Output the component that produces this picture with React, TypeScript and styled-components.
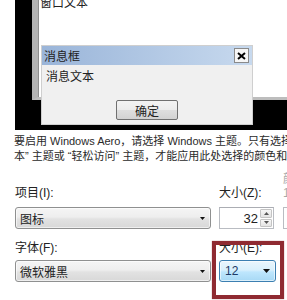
import React from 'react';
import styled, {createGlobalStyle} from 'styled-components';

const GlobalStyle = createGlobalStyle`
  html, body {
    margin: 0;
    padding: 0;
    background: #fff;
  }
  body {
    font-family: "Liberation Sans", "Noto Sans CJK SC", sans-serif;
    font-size: 12px;
    color: #222;
  }
`;

const Page = styled.div`
  position: relative;
  width: 287px;
  height: 300px;
  overflow: hidden;
`;

/* preview of the window colours */
const Preview = styled.div`
  position: relative;
  height: 130px;
  margin-left: 15px;
  background: #000;
  overflow: hidden;
`;

const BackWindow = styled.div`
  margin-left: 17px;
  height: 97px;
  background: #fff;
  border-left: 6px solid #b4b4b4;
  border-bottom: 3px solid #bdbdbd;
  box-shadow: inset 1px 0 0 #8f8f8f;
  overflow: hidden;
`;

const WindowText = styled.div`
  margin-top: -4px;
  padding-left: 2px;
  line-height: 14px;
`;

const MessageBox = styled.div`
  position: absolute;
  left: 26px;
  top: 45px;
  width: 212px;
  height: 80px;
  box-sizing: border-box;
  border: 1px solid #cfcfcf;
  background: #f0f0f0;
  display: flex;
  flex-direction: column;
`;

const TitleBar = styled.div`
  height: 19px;
  display: flex;
  align-items: center;
  justify-content: space-between;
  padding: 0 3px 0 2px;
  background: linear-gradient(to right, #9ab5d9, #c7d9ee);
`;

const CloseButton = styled.div`
  width: 15px;
  height: 15px;
  box-sizing: border-box;
  border: 1px solid #8a8a8a;
  background: #f6f6f6;
  display: flex;
  align-items: center;
  justify-content: center;
`;

const MessageBody = styled.div`
  flex: 1;
  display: flex;
  flex-direction: column;
  padding: 6px 0 0 4px;
`;

const MessageText = styled.div`
  line-height: 12px;
`;

const OkButton = styled.div`
  align-self: center;
  margin: 17px 0 0 -4px;
  width: 62px;
  height: 20px;
  box-sizing: border-box;
  border: 1px solid #707070;
  border-radius: 2px;
  background: linear-gradient(#f3f3f3, #ececec 48%, #dedede 52%, #d2d2d2);
  display: flex;
  align-items: center;
  justify-content: center;
`;

const Paragraph = styled.div`
  height: 30px;
  padding: 4px 0 0 14px;
`;

const Line = styled.div`
  white-space: nowrap;
  overflow: hidden;
  line-height: 15px;
  font-size: 11px;
  color: #2a2a2a;
`;

const Row = styled.div<{ $top: number; $height: number }>`
  display: grid;
  grid-template-columns: 204px 64px 40px;
  height: ${p => p.$height}px;
  padding-left: 15px;
  margin-top: ${p => p.$top}px;
`;

const Field = styled.div`
  height: 100%;
  display: flex;
  flex-direction: column;
  justify-content: flex-end;
`;

const Label = styled.div<{ $gap: number; $dim?: boolean }>`
  line-height: 14px;
  margin-bottom: ${p => p.$gap}px;
  color: ${p => (p.$dim ? '#a8a8a8' : '#222')};
  white-space: nowrap;
`;

const Combo = styled.div<{ $width: number; $active?: boolean }>`
  width: ${p => p.$width}px;
  height: 22px;
  box-sizing: border-box;
  border: 1px solid ${p => (p.$active ? '#3c7fb1' : '#8f9090')};
  border-radius: 3px;
  background: ${p =>
    p.$active
      ? 'linear-gradient(#eaf6fd, #d9f0fc 45%, #bee6fd 55%, #a7d9f5)'
      : 'linear-gradient(#f5f5f5, #eeeeee 45%, #e2e2e2 55%, #d8d8d8)'};
  box-shadow: inset 0 0 0 1px rgba(255, 255, 255, 0.6);
  display: flex;
  align-items: center;
  justify-content: space-between;
  padding: 0 5px 0 ${p => (p.$active ? 5 : 4)}px;
  color: ${p => (p.$active ? '#1d3a66' : '#222')};
`;

const SpinBox = styled.div`
  width: 55px;
  height: 22px;
  box-sizing: border-box;
  border: 1px solid #b9bcc2;
  border-top-color: #abadb3;
  background: #fff;
  display: flex;
  align-items: stretch;
  padding: 1px;
`;

const SpinValue = styled.div`
  flex: 1;
  display: flex;
  align-items: center;
  justify-content: flex-end;
  padding-right: 2px;
  font-size: 13px;
`;

const SpinButtons = styled.div`
  width: 12px;
  display: flex;
  flex-direction: column;
  gap: 1px;
`;

const SpinButton = styled.div`
  flex: 1;
  box-sizing: border-box;
  border: 1px solid #c4c4c4;
  border-radius: 1px;
  background: linear-gradient(#f7f7f7, #e4e4e4);
  display: flex;
  align-items: center;
  justify-content: center;
`;

const BlankBox = styled.div`
  width: 50px;
  height: 22px;
  box-sizing: border-box;
  border: 1px solid #b9bcc2;
  background: #fff;
`;

const Highlight = styled.div`
  position: absolute;
  left: 212px;
  top: 241px;
  width: 72px;
  height: 58px;
  box-sizing: border-box;
  border: 4px solid #8f2a31;
  box-shadow: 0 0 1px rgba(120, 20, 30, 0.6);
`;

function Arrow({w, h}: { w: number; h: number }) {
  return (
    <svg width={w} height={h} viewBox={`0 0 ${w} ${h}`}>
      <polygon points={`0,0 ${w},0 ${w / 2},${h}`} fill="#111"/>
    </svg>
  );
}

function SpinArrow({up}: { up?: boolean }) {
  return (
    <svg width="5" height="3" viewBox="0 0 5 3">
      <polygon points={up ? '0,3 5,3 2.5,0' : '0,0 5,0 2.5,3'} fill="#555"/>
    </svg>
  );
}

export default function App() {
  return (
    <Page>
      <GlobalStyle/>
      <Preview>
        <BackWindow>
          <WindowText>窗口文本</WindowText>
        </BackWindow>
        <MessageBox>
          <TitleBar>
            <span>消息框</span>
            <CloseButton>
              <svg width="9" height="8" viewBox="0 0 9 8">
                <path d="M1 1 L8 7 M8 1 L1 7" stroke="#000" strokeWidth="2"/>
              </svg>
            </CloseButton>
          </TitleBar>
          <MessageBody>
            <MessageText>消息文本</MessageText>
            <OkButton>确定</OkButton>
          </MessageBody>
        </MessageBox>
      </Preview>

      <Paragraph>
        <Line>要启用 Windows Aero，请选择 Windows 主题。只有选择“Windows 7 基</Line>
        <Line>本” 主题或 “轻松访问” 主题，才能应用此处选择的颜色和字体。</Line>
      </Paragraph>

      <Row $top={8} $height={57}>
        <Field>
          <Label $gap={7}>项目(I):</Label>
          <Combo $width={196}>
            <span>图标</span>
            <Arrow w={5} h={3}/>
          </Combo>
        </Field>
        <Field>
          <Label $gap={7}>大小(Z):</Label>
          <SpinBox>
            <SpinValue>32</SpinValue>
            <SpinButtons>
              <SpinButton><SpinArrow up/></SpinButton>
              <SpinButton><SpinArrow/></SpinButton>
            </SpinButtons>
          </SpinBox>
        </Field>
        <Field>
          <Label $gap={7} $dim>颜色<br/>1(L):</Label>
          <BlankBox/>
        </Field>
      </Row>

      <Row $top={12} $height={41}>
        <Field>
          <Label $gap={5}>字体(F):</Label>
          <Combo $width={196}>
            <span>微软雅黑</span>
            <Arrow w={5} h={3}/>
          </Combo>
        </Field>
        <Field>
          <Label $gap={5}>大小(E):</Label>
          <Combo $width={57} $active>
            <span>12</span>
            <Arrow w={7} h={4}/>
          </Combo>
        </Field>
      </Row>

      <Highlight/>
    </Page>
  );
}
